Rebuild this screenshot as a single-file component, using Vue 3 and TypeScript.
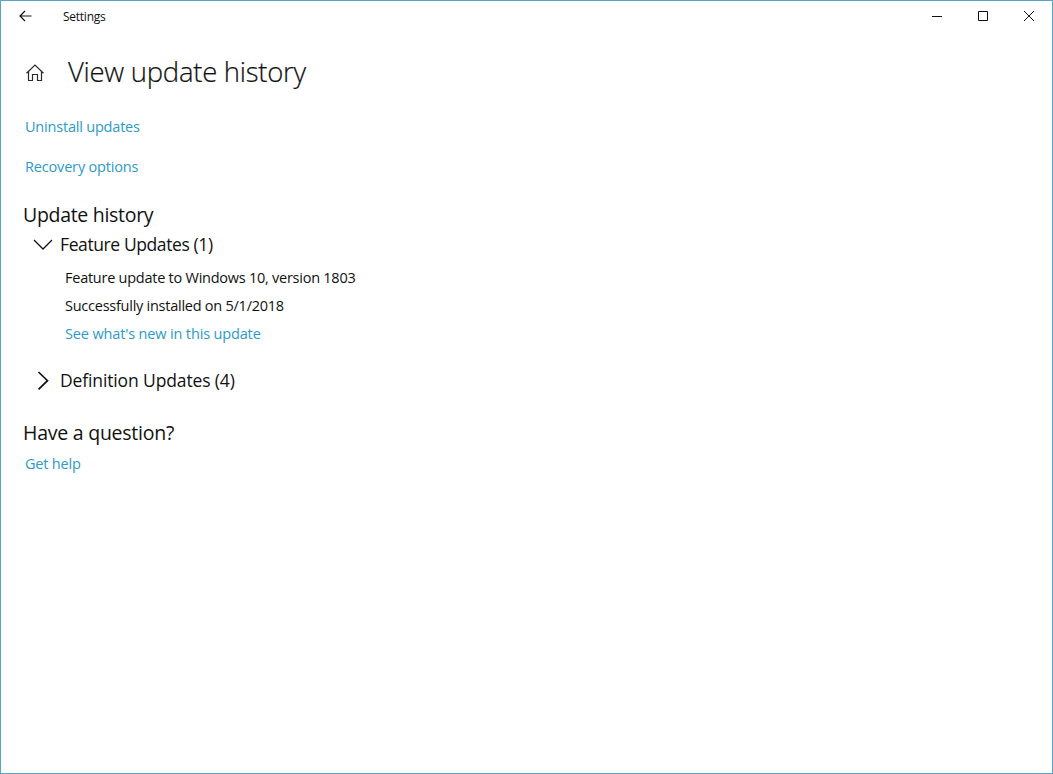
<script setup lang="ts">
import { ref } from 'vue'

interface UpdateEntry {
  name: string
  status: string
}

interface UpdateGroup {
  id: string
  title: string
  count: number
  entries: UpdateEntry[]
}

const groups: UpdateGroup[] = [
  {
    id: 'feature',
    title: 'Feature Updates',
    count: 1,
    entries: [
      {
        name: 'Feature update to Windows 10, version 1803',
        status: 'Successfully installed on 5/1/2018',
      },
    ],
  },
  { id: 'definition', title: 'Definition Updates', count: 4, entries: [] },
]

const expanded = ref<string[]>(['feature'])

function toggle(id: string) {
  expanded.value = expanded.value.includes(id)
    ? expanded.value.filter((g) => g !== id)
    : [...expanded.value, id]
}
</script>

<template>
  <div class="window">
    <header class="titlebar">
      <button class="back" aria-label="Back">
        <svg width="13" height="12" viewBox="0 0 13 12">
          <path d="M12.500 6H1M6 1L1 6l5 5" />
        </svg>
      </button>
      <span class="app-name">Settings</span>
      <div class="controls">
        <button aria-label="Minimize">
          <svg width="10" height="10" viewBox="0 0 10 10"><path d="M0 5.5h10" /></svg>
        </button>
        <button aria-label="Maximize">
          <svg width="10" height="10" viewBox="0 0 10 10"><path d="M.5.5h9v9h-9z" /></svg>
        </button>
        <button aria-label="Close">
          <svg width="10" height="10" viewBox="0 0 10 10"><path d="M0 0l10 10M10 0L0 10" /></svg>
        </button>
      </div>
    </header>

    <div class="page-head">
      <svg class="home" width="18" height="18" viewBox="0 0 18 18">
        <path d="M.5 9.2L9 1l8.500 8.200M2.500 7.500v9h4v-6h5v6h4v-9" />
      </svg>
      <h1>View update history</h1>
    </div>

    <main>
      <a class="link uninstall">Uninstall updates</a>
      <a class="link recovery">Recovery options</a>

      <h2>Update history</h2>
      <section v-for="group in groups" :key="group.id" class="group">
        <button class="group-head" :class="group.id" @click="toggle(group.id)">
          <svg
            class="chevron"
            :class="{ open: expanded.includes(group.id) }"
            width="20"
            height="20"
            viewBox="0 0 20 20"
          >
            <path v-if="expanded.includes(group.id)" d="M1 6l9 9 9-9" />
            <path v-else d="M5.500 2l9 8.700-9 8.700" />
          </svg>
          <span>{{ group.title }} ({{ group.count }})</span>
        </button>
        <div v-if="expanded.includes(group.id)" class="entries">
          <div v-for="entry in group.entries" :key="entry.name">
            <p class="name">{{ entry.name }}</p>
            <p class="status">{{ entry.status }}</p>
            <a class="link news">See what's new in this update</a>
          </div>
        </div>
      </section>

      <h2 class="question">Have a question?</h2>
      <a class="link help">Get help</a>
    </main>
  </div>
</template>

<style>
body {
  margin: 0;
}
</style>

<style scoped>
.window {
  box-sizing: border-box;
  height: 774px;
  border: 1px solid #55a5c8;
  background: #fff;
  color: #111;
  font-family: 'Segoe UI', 'Open Sans', 'Noto Sans', sans-serif;
  font-size: 14px;
  overflow: hidden;
}

button {
  padding: 0;
  border: 0;
  background: none;
  color: inherit;
  font: inherit;
}

svg {
  display: block;
  fill: none;
  stroke: #111;
  stroke-width: 1;
}

.titlebar {
  display: flex;
  align-items: center;
  height: 30px;
}

.back {
  width: 48px;
  padding-left: 18px;
}

.back svg {
  stroke-width: 1.2;
}

.app-name {
  margin-left: 14px;
  padding-top: 1px;
  font-size: 12px;
  letter-spacing: -0.25px;
}

.controls {
  display: flex;
  margin-left: auto;
}

.controls button {
  display: flex;
  align-items: center;
  justify-content: center;
  width: 46px;
  height: 30px;
}

.page-head {
  display: flex;
  align-items: center;
  height: 40px;
  margin-top: 21px;
  padding-left: 25px;
}

.home {
  margin-top: 2px;
  stroke: #2a2a2a;
  stroke-width: 1.2;
}

h1 {
  margin: 0 0 0 24px;
  font-size: 27.500px;
  font-weight: 300;
  line-height: 40px;
  letter-spacing: -0.28px;
  -webkit-text-stroke: 0.2px #111;
}

main {
  display: flex;
  flex-direction: column;
  align-items: flex-start;
  padding: 25px 0 0 24px;
}

.link {
  color: #2d9ac8;
  font-size: 14.500px;
  line-height: 20px;
  letter-spacing: -0.2px;
  white-space: nowrap;
}

.recovery {
  margin-top: 20px;
  letter-spacing: -0.17px;
}

h2 {
  margin: 24px 0 0 -2px;
  font-size: 19.500px;
  font-weight: 400;
  line-height: 28px;
  letter-spacing: -0.3px;
}

.group-head {
  display: flex;
  align-items: center;
  gap: 7px;
  height: 28px;
  margin: 1px 0 0 8px;
  font-size: 17.500px;
  letter-spacing: -0.4px;
  white-space: nowrap;
}

.definition {
  letter-spacing: -0.13px;
}

.chevron {
  stroke-width: 1.300;
}

.chevron:not(.open) {
  stroke-width: 1.700;
}

.entries {
  padding: 6px 0 17px 40px;
}

.entries p {
  margin: 0;
  font-size: 14.500px;
  line-height: 28px;
  letter-spacing: -0.25px;
}

.news {
  display: block;
  line-height: 28px;
  letter-spacing: -0.15px;
}

.question {
  margin-top: 25px;
  letter-spacing: -0.24px;
}

.help {
  margin-top: 7px;
}
</style>
